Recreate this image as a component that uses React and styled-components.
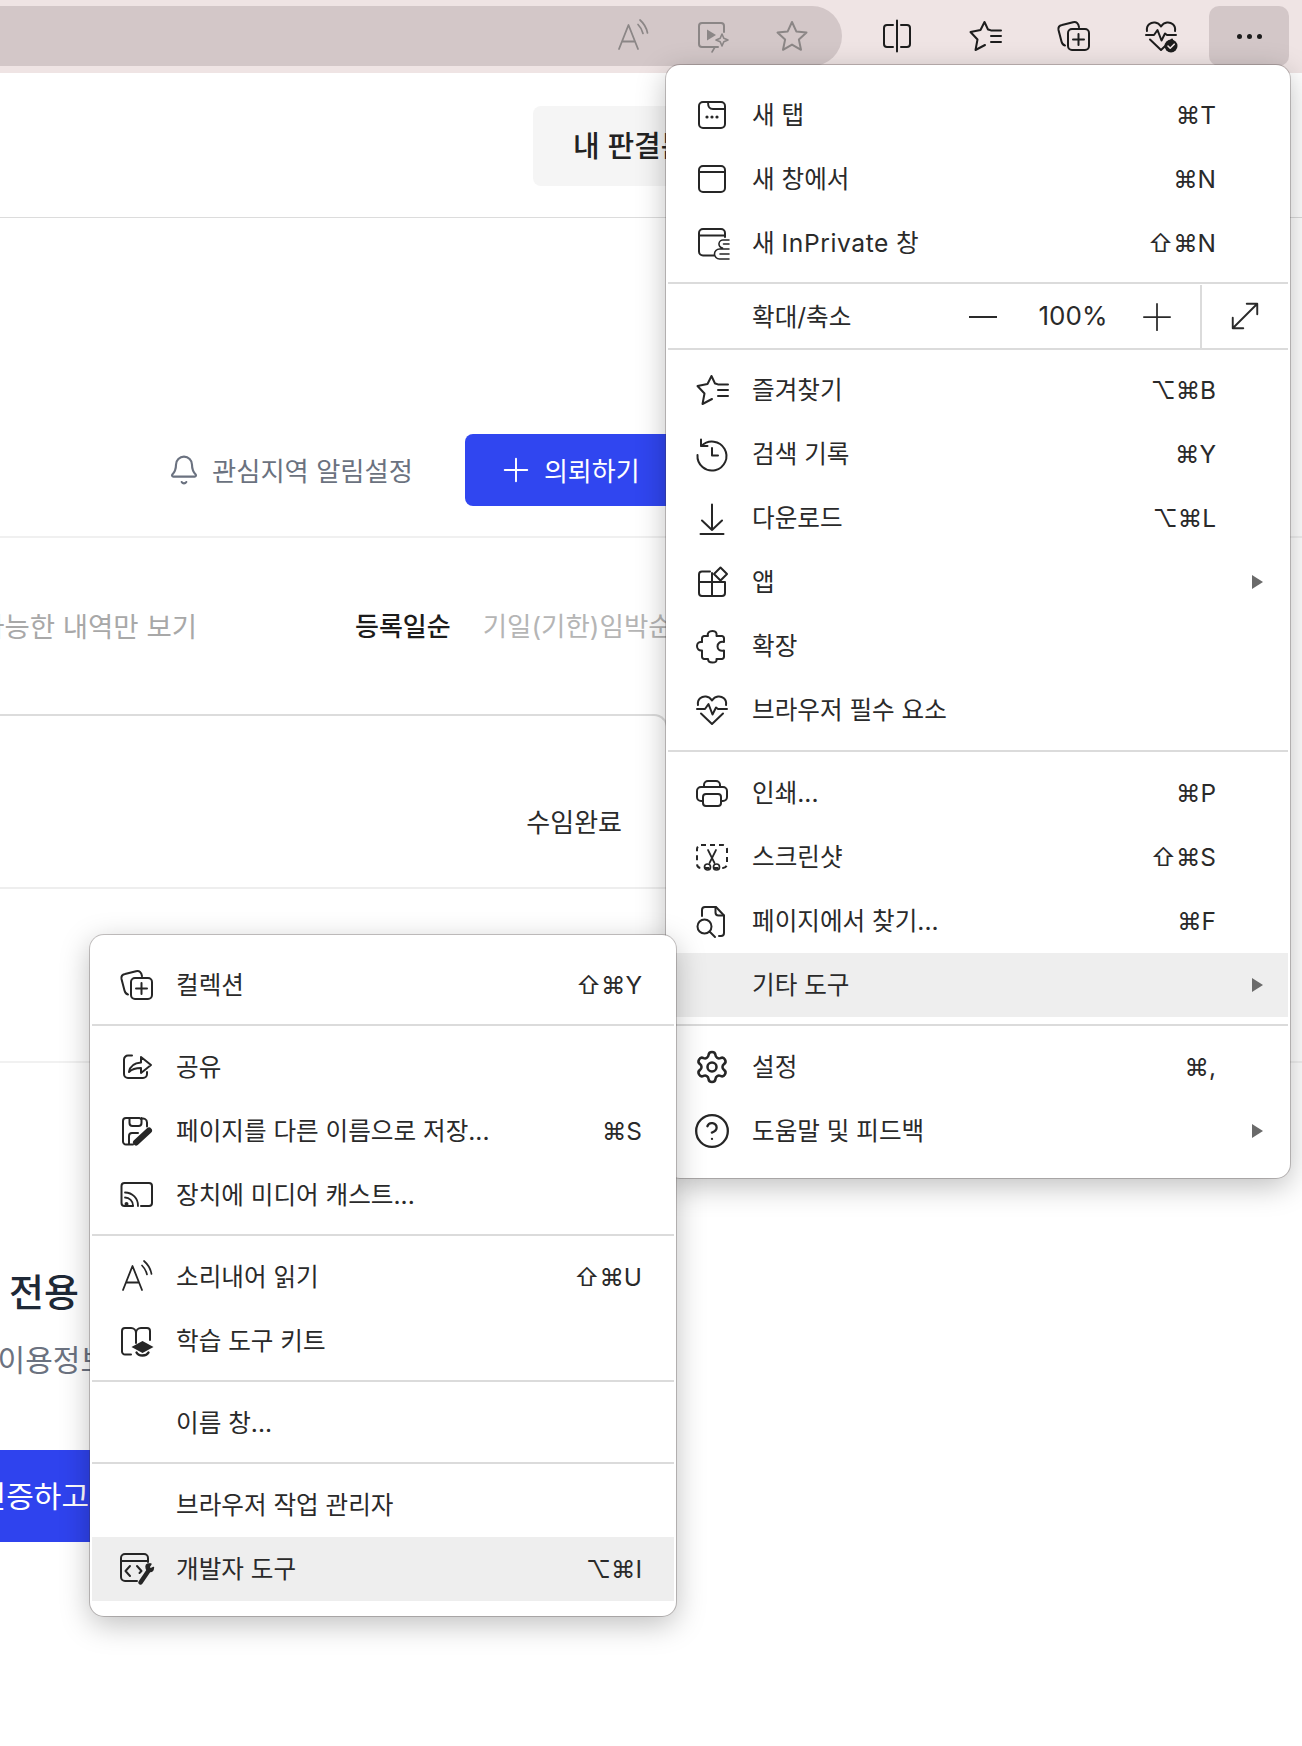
import React from "react";
import styled, { createGlobalStyle } from "styled-components";
import { Settings, CircleHelp, Bell } from "lucide-react";

const Global = createGlobalStyle`
  html, body { margin: 0; background: #fff; }
  * { box-sizing: border-box; }
  body { font-family: Inter, "Noto Sans CJK KR", "DejaVu Sans", sans-serif; color: #262626; }
`;

const Screen = styled.div`
  position: relative;
  width: 1302px;
  height: 1746px;
  overflow: hidden;
  background: #fff;
`;

/* browser chrome */
const Toolbar = styled.header`
  display: flex;
  height: 73px;
  padding-top: 6px;
  padding-right: 12px;
  background: #efe4e4;
`;
const AddressBar = styled.div`
  display: flex;
  align-items: center;
  justify-content: flex-end;
  gap: 48px;
  width: 842px;
  height: 60px;
  padding-right: 34px;
  border-radius: 0 30px 30px 0;
  background: #d3c7c8;
  color: #8b8686;
`;
const ToolGroup = styled.div`
  display: flex;
  align-items: center;
  gap: 56px;
  height: 60px;
  margin-left: 39px;
  color: #1d1d1d;
`;
const MoreButton = styled.button`
  display: flex;
  align-items: center;
  justify-content: center;
  gap: 5px;
  width: 80px;
  height: 60px;
  margin-left: 32px;
  padding: 0;
  border: 0;
  border-radius: 10px;
  background: #d3c7c8;
`;
const Dot = styled.i`
  width: 5px;
  height: 5px;
  border-radius: 50%;
  background: #1d1d1d;
`;

/* page behind the menus */
const Header = styled.div`
  height: 145px;
  padding: 33px 0 0 533px;
  border-bottom: 1px solid #dcdcdc;
`;
const VerdictButton = styled.div`
  display: flex;
  align-items: center;
  width: 220px;
  height: 80px;
  padding: 0 0 4px 40px;
  border-radius: 8px;
  background: #f5f5f5;
  font-size: 29px;
  font-weight: 500;
  color: #222;
  white-space: nowrap;
`;
const AlertRow = styled.div`
  display: flex;
  align-items: center;
  height: 320px;
  padding: 216px 0 31px 168px;
  border-bottom: 2px solid #f0f0f0;
`;
const AlertLink = styled.div`
  display: flex;
  align-items: center;
  gap: 12px;
  font-size: 26.3px;
  color: #6b7280;
  white-space: nowrap;
`;
const RequestButton = styled.div`
  display: flex;
  align-items: center;
  gap: 16px;
  width: 240px;
  height: 72px;
  margin-left: 52px;
  padding-left: 39px;
  border-radius: 8px;
  background: #3046f0;
  color: #fff;
  font-size: 26px;
  white-space: nowrap;
`;
const SortRow = styled.div`
  display: flex;
  align-items: center;
  height: 176px;
  padding-bottom: 3px;
  font-size: 26px;
  white-space: nowrap;
`;
const CutLeft = styled.div`
  display: flex;
  justify-content: flex-end;
  width: ${(p) => p.$width}px;
  white-space: nowrap;
`;
const FilterText = styled.span`
  font-size: 27.5px;
  color: #a8a8a8;
`;
const SortOption = styled.span`
  margin-left: ${(p) => p.$gap}px;
  font-size: ${(p) => (p.$on ? 26 : 26.5)}px;
  color: ${(p) => (p.$on ? "#1c1c1c" : "#b5b5b5")};
  font-weight: ${(p) => (p.$on ? 500 : 400)};
`;
const CaseCard = styled.div`
  display: flex;
  justify-content: flex-end;
  width: 668px;
  height: 175px;
  padding: 86px 44px 0 0;
  border-top: 2px solid #dcdcdc;
  border-right: 2px solid #dcdcdc;
  border-bottom: 2px solid #eeeeee;
  border-top-right-radius: 14px;
  font-size: 26px;
  line-height: 42px;
  color: #2b2b2b;
`;
const EmptyRow = styled.div`
  height: 174px;
  border-bottom: 2px solid #f1f1f1;
`;
const Cta = styled.section`
  padding-top: 204px;
`;
const CtaTitle = styled.h2`
  margin: 0;
  padding-left: 9px;
  font-size: 38px;
  line-height: 50px;
  font-weight: 500;
  color: #1f2937;
`;
const CtaText = styled(CutLeft)`
  margin-top: 23px;
  font-size: 30px;
  line-height: 40px;
  color: #6b7280;
`;
const CtaButton = styled(CutLeft)`
  align-items: center;
  height: 92px;
  margin-top: 70px;
  padding: 0 31px 4px 0;
  background: #2f43ee;
  color: #fff;
  font-size: 30px;
`;

/* menus */
const Panel = styled.nav`
  position: absolute;
  padding: 18px 2px 15px;
  border-radius: 14px;
  background: #fff;
  box-shadow: 0 0 0 1px rgba(60, 50, 50, 0.28), 0 8px 30px rgba(0, 0, 0, 0.26);
`;
const MainMenu = styled(Panel)`
  top: 65px;
  left: 666px;
  width: 624px;
  height: 1113px;
`;
const SubMenu = styled(Panel)`
  top: 935px;
  left: 90px;
  width: 586px;
  height: 681px;
`;
const Row = styled.div`
  display: flex;
  align-items: center;
  height: 64px;
  padding: 0 ${(p) => p.$right ?? 25}px 0 28px;
  background: ${(p) => (p.$on ? "#eeeeee" : "transparent")};
  font-size: 24.6px;
  color: #2a2a2a;
  white-space: nowrap;
`;
const IconSlot = styled.span`
  display: flex;
  width: 32px;
  height: 32px;
  margin-right: 24px;
  flex: none;
  color: #262626;
`;
const Label = styled.span`
  margin-bottom: 4px;
`;
const Latin = styled.span`
  letter-spacing: 0.6px;
`;
const Shortcut = styled.span`
  margin-left: auto;
  font-family: Inter, "DejaVu Sans", sans-serif;
  font-size: 24.4px;
  color: #2a2a2a;
`;
const ArrowSlot = styled.span`
  display: flex;
  justify-content: flex-end;
  width: 47px;
  flex: none;
  margin-left: ${(p) => (p.$alone ? "auto" : "0")};
`;
const Arrow = styled.i`
  width: 0;
  height: 0;
  border-left: 11px solid #6a6a6a;
  border-top: 7px solid transparent;
  border-bottom: 7px solid transparent;
`;
const Divider = styled.hr`
  height: 2px;
  margin: ${(p) => p.$t ?? 7}px 0 ${(p) => p.$b ?? 9}px;
  border: 0;
  background: #dbdbdb;
`;
const ZoomRow = styled.div`
  display: flex;
  align-items: center;
  height: 63px;
  padding-left: 84px;
  font-size: 24.6px;
  color: #2a2a2a;
`;
const ZoomMinus = styled.span`
  width: 28px;
  height: 2px;
  margin-left: auto;
  background: #2a2a2a;
`;
const ZoomValue = styled.span`
  width: 146px;
  padding: 0 0 2px 6px;
  text-align: center;
  font-size: 26px;
`;
const ZoomPlus = styled.span`
  display: flex;
  margin-right: 29px;
`;
const ZoomExpand = styled.span`
  display: flex;
  align-items: center;
  justify-content: center;
  width: 88px;
  height: 100%;
  padding-bottom: 2px;
  border-left: 2px solid #dbdbdb;
`;

const Svg = ({ children, size = 32 }) => (
  <svg
    width={size}
    height={size}
    viewBox="0 0 32 32"
    fill="none"
    stroke="currentColor"
    strokeWidth="2"
    strokeLinecap="round"
    strokeLinejoin="round"
    style={{ overflow: "visible", flex: "none" }}
  >
    {children}
  </svg>
);

const NewTab = () => (
  <Svg>
    <rect x="3" y="3" width="26" height="26" rx="4" />
    <path d="M12 3c0 5 1 7 5 7h12" />
    <g fill="currentColor" stroke="none">
      <circle cx="11" cy="18" r="1.6" />
      <circle cx="16" cy="18" r="1.6" />
      <circle cx="21" cy="18" r="1.6" />
    </g>
  </Svg>
);
const NewWindow = () => (
  <Svg>
    <rect x="3" y="3" width="26" height="26" rx="4" />
    <path d="M3 9h26" />
  </Svg>
);
const InPrivate = () => (
  <Svg>
    <path d="M18 28.500H7a4 4 0 0 1-4-4V6a4 4 0 0 1 4-4h18a4 4 0 0 1 4 4v4M3 8.500h26" />
    <path d="M33 13h-5.500a4 4 0 0 0-1 8M27.500 17H33M33 22h-9.500a5 5 0 0 0 0 10H33M24 27h9" strokeWidth="1.600" />
  </Svg>
);
const Favorites = () => (
  <Svg>
    <path d="M21 10l-2-.5L15.500 2 11.500 10 1.500 12l7 7.500L6.500 30l9.500-5" />
    <path d="M22 10.500h10M22 16h10M22 22h10" />
  </Svg>
);
const History = () => (
  <Svg>
    <path d="M5.500 8A14.500 14.500 0 1 1 1.500 17" />
    <path d="M5 1.500V8h6.500M16 10v7.500h6" />
  </Svg>
);
const Download = () => (
  <Svg>
    <path d="M16 2.500V28M6 18.500 16 28l10-9.500M4.500 32h23" />
  </Svg>
);
const Apps = () => (
  <Svg>
    <path d="M14 5.500H6a3 3 0 0 0-3 3V27a3 3 0 0 0 3 3h20a3 3 0 0 0 3-3V16H3M16 7v23" />
    <path d="M24.500 1.500 31 8l-6.500 6.500L18 8z" />
  </Svg>
);
const Puzzle = () => (
  <Svg>
    <path d="M12 6c-1-3 1-5 4.500-5S21 3 20.500 6H26a2.500 2.500 0 0 1 2 2.500V12c-3.500-1-6.500 1-6.500 4.500s3 5 6.500 4v6a2.500 2.500 0 0 1-2 2.500h-5.500c.5 2.500-1 3.500-4 3.500s-4.500-1-4.500-3.500H8a2.500 2.500 0 0 1-2-2.500v-6c-3 .5-5-1.500-5-4.500S3 11.500 6 12V8.500A2.500 2.500 0 0 1 8 6z" />
  </Svg>
);
const Heart = ({ badge }) => (
  <Svg>
    <path d="M2 11C1 5 6 2 10 2.500c2.500.3 4.500 1.700 6 4 1.500-2.300 3.500-3.700 6-4C26 2 31 5 30 11" />
    <path d="M5 19.500 16 30l11-10.500" />
    <path d="M1 15h8l3.500-5 4 10.500 3.500-7 2 1.500h9" />
    {badge && (
      <>
        <circle cx="26" cy="26" r="6.500" fill="currentColor" stroke="none" />
        <path d="M23 26l2.200 2.200 4-4" stroke="#efe4e4" strokeWidth="1.600" />
      </>
    )}
  </Svg>
);
const Printer = () => (
  <Svg>
    <path d="M8 10V8a4 4 0 0 1 4-4h8a4 4 0 0 1 4 4v2" />
    <path d="M7 24H5a4 4 0 0 1-4-4v-6a4 4 0 0 1 4-4h22a4 4 0 0 1 4 4v6a4 4 0 0 1-4 4h-2" />
    <rect x="7" y="17" width="18" height="12" rx="3" />
  </Svg>
);
const Screenshot = () => (
  <Svg>
    <rect x="1" y="4" width="30" height="23" rx="4" strokeDasharray="5 4" strokeLinecap="butt" />
    <path d="M12 9l6.500 13M20 9l-6.500 13" strokeWidth="1.700" />
    <circle cx="11.500" cy="26" r="3" strokeWidth="1.700" />
    <circle cx="20.500" cy="26" r="3" strokeWidth="1.700" />
  </Svg>
);
const FindPage = () => (
  <Svg>
    <path d="M6 11V5a3 3 0 0 1 3-3h11l8 8.500V28a3 3 0 0 1-3 3h-2" />
    <path d="M19.500 2v5.500a3 3 0 0 0 3 3H28" />
    <circle cx="8.500" cy="21.500" r="7" />
    <path d="M13.500 26.500 19 32" />
  </Svg>
);
const Collections = () => (
  <Svg>
    <rect x="11" y="9" width="21" height="21" rx="4" />
    <path d="M21.500 14v11M16 19.500h11" />
    <path d="M8 25.500c-2-.500-3-2-3.500-4L1.500 10C1 7 2.500 5.500 5 5l11-2.800c3.500-.7 5.500 1 6 5" />
  </Svg>
);
const Share = () => (
  <Svg>
    <path d="M12 4.500H8a4 4 0 0 0-4 4V23a4 4 0 0 0 4 4h15a4 4 0 0 0 4-4v-2" />
    <path d="M9 21c1-6 5-9 12-9.500V6l10 8-10 8v-5c-5 0-9 1-12 4z" />
  </Svg>
);
const SaveAs = () => (
  <Svg>
    <path d="M13 29.500H6a3 3 0 0 1-3-3V6a3 3 0 0 1 3-3h13.500l1.500 1a4 4 0 0 1 6 3.500v4" />
    <path d="M9.500 3v5a3 3 0 0 0 3 3h6a3 3 0 0 0 3-3V3M9 29v-8a3 3 0 0 1 3-3h6" />
    <path d="M16 27.500 29 15.500" strokeWidth="6" />
  </Svg>
);
const Cast = () => (
  <Svg>
    <path d="M1.500 7a3 3 0 0 1 3-3H29a3 3 0 0 1 3 3v17a3 3 0 0 1-3 3h-8M1.500 7v17a3 3 0 0 0 3 3H13" />
    <path d="M5 13.500A13 13 0 0 1 18 27M5 18.500A8 8 0 0 1 13 26.500" strokeWidth="1.800" />
    <circle cx="6.500" cy="25" r="2" fill="currentColor" stroke="none" />
  </Svg>
);
const ReadAloud = () => (
  <Svg>
    <path d="M3 29 12.500 5 22 29M6.500 21.500h12" strokeWidth="1.800" />
    <path d="M24 0c4 3.500 6.500 7.500 7.500 13M22 4.500c2.500 2.500 4.200 5.500 5 9" strokeWidth="1.700" />
  </Svg>
);
const Learning = () => (
  <Svg>
    <path d="M11 29.500H5a3 3 0 0 1-3-3V6a3 3 0 0 1 3-3h6a5 5 0 0 1 5 5v10M16 8a5 5 0 0 1 5-5h6a3 3 0 0 1 3 3v9" />
    <path d="M11.500 22 22.500 16l11 6-11 6z" fill="currentColor" stroke="none" />
    <path d="M16.500 27.500c2 4 10 4 12 0" strokeWidth="2.400" />
  </Svg>
);
const DevTools = () => (
  <Svg>
    <path d="M17 28H5a4 4 0 0 1-4-4V5a4 4 0 0 1 4-4h19a4 4 0 0 1 4 4v4M1 8h27" />
    <path d="M10 13l-4.500 5 4.500 5M17 13l4.500 5-2 2" />
    <path d="M20.500 29.500 29 17" strokeWidth="4.500" />
    <path d="M26 13.500c0 3 2 5 5 5 1.500 0 2.200-1.500 2.500-4l-3 1.500-1.500-2 2-3c-3-.5-5 0-5 2.500z" fill="currentColor" strokeWidth="1.400" />
  </Svg>
);
const SplitScreen = () => (
  <Svg>
    <path d="M12 5H6a3 3 0 0 0-3 3v16a3 3 0 0 0 3 3h6M20 5h6a3 3 0 0 1 3 3v16a3 3 0 0 1-3 3h-6M16 .5v31" />
  </Svg>
);
const VideoStar = () => (
  <Svg>
    <path d="M22 27H6a3 3 0 0 1-3-3V6a3 3 0 0 1 3-3h19a3 3 0 0 1 3 3v6" />
    <path d="M11 9.500v11l9-5.500z" fill="currentColor" stroke="none" />
    <path d="M26 14l1.800 4.200L32 20l-4.200 1.800L26 26l-1.800-4.200L20 20l4.200-1.800zM19 27l-3 5" strokeWidth="1.600" />
  </Svg>
);
const Star = () => (
  <Svg>
    <path d="M16 2l4.300 9.400 10.200 1.200-7.600 7 2.100 10.200L16 24.600l-9 5.200 2.100-10.200-7.600-7 10.200-1.200z" />
  </Svg>
);

const MenuRow = ({ icon: Icon, label, shortcut, arrow, on, right }) => (
  <Row $on={on} $right={right}>
    <IconSlot>{Icon && <Icon />}</IconSlot>
    <Label>{label}</Label>
    {shortcut && <Shortcut>{shortcut}</Shortcut>}
    {right === undefined && (
      <ArrowSlot $alone={!shortcut}>{arrow && <Arrow />}</ArrowSlot>
    )}
  </Row>
);

const SettingsIcon = () => <Settings size={36} strokeWidth={1.7} style={{ margin: -2 }} />;
const HelpIcon = () => <CircleHelp size={38} strokeWidth={1.45} style={{ margin: -3 }} />;

export default function App() {
  return (
    <Screen>
      <Global />
      <Toolbar>
        <AddressBar>
          <ReadAloud />
          <VideoStar />
          <Star />
        </AddressBar>
        <ToolGroup>
          <SplitScreen />
          <Favorites />
          <Collections />
          <Heart badge />
        </ToolGroup>
        <MoreButton aria-label="더 보기">
          <Dot />
          <Dot />
          <Dot />
        </MoreButton>
      </Toolbar>

      <Header>
        <VerdictButton>내 판결문</VerdictButton>
      </Header>
      <AlertRow>
        <AlertLink>
          <Bell size={32} strokeWidth={1.6} />
          관심지역 알림설정
        </AlertLink>
        <RequestButton>
          <Svg size={24}>
            <path d="M16 1v30M1 16h30" strokeWidth="2.600" />
          </Svg>
          의뢰하기
        </RequestButton>
      </AlertRow>
      <SortRow>
        <CutLeft $width={197}>
          <FilterText>가능한 내역만 보기</FilterText>
        </CutLeft>
        <SortOption $gap={158} $on>등록일순</SortOption>
        <SortOption $gap={32}>기일(기한)임박순</SortOption>
      </SortRow>
      <CaseCard>수임완료</CaseCard>
      <EmptyRow />
      <Cta>
        <CtaTitle>전용</CtaTitle>
        <CtaText $width={108}>이용정보</CtaText>
        <CtaButton $width={120}>인증하고</CtaButton>
      </Cta>

      <MainMenu>
        <MenuRow icon={NewTab} label="새 탭" shortcut="⌘T" />
        <MenuRow icon={NewWindow} label="새 창에서" shortcut="⌘N" />
        <MenuRow icon={InPrivate} label={<>새 <Latin>InPrivate</Latin> 창</>} shortcut="⇧⌘N" />
        <Divider $b={1} />
        <ZoomRow>
          <Label>확대/축소</Label>
          <ZoomMinus />
          <ZoomValue>100%</ZoomValue>
          <ZoomPlus>
            <Svg size={28}>
              <path d="M16 1v30M1 16h30" />
            </Svg>
          </ZoomPlus>
          <ZoomExpand>
            <Svg size={28}>
              <path d="M2 30 30 2M18 2h12v12M2 18v12h12" strokeWidth="2.200" />
            </Svg>
          </ZoomExpand>
        </ZoomRow>
        <Divider $t={0} $b={8} />
        <MenuRow icon={Favorites} label="즐겨찾기" shortcut="⌥⌘B" />
        <MenuRow icon={History} label="검색 기록" shortcut="⌘Y" />
        <MenuRow icon={Download} label="다운로드" shortcut="⌥⌘L" />
        <MenuRow icon={Apps} label="앱" arrow />
        <MenuRow icon={Puzzle} label="확장" />
        <MenuRow icon={Heart} label="브라우저 필수 요소" />
        <Divider $t={8} />
        <MenuRow icon={Printer} label="인쇄..." shortcut="⌘P" />
        <MenuRow icon={Screenshot} label="스크린샷" shortcut="⇧⌘S" />
        <MenuRow icon={FindPage} label="페이지에서 찾기..." shortcut="⌘F" />
        <MenuRow label="기타 도구" arrow on />
        <Divider />
        <MenuRow icon={SettingsIcon} label="설정" shortcut="⌘," />
        <MenuRow icon={HelpIcon} label="도움말 및 피드백" arrow />
      </MainMenu>

      <SubMenu>
        <MenuRow icon={Collections} label="컬렉션" shortcut="⇧⌘Y" right={32} />
        <Divider />
        <MenuRow icon={Share} label="공유" right={32} />
        <MenuRow icon={SaveAs} label="페이지를 다른 이름으로 저장..." shortcut="⌘S" right={32} />
        <MenuRow icon={Cast} label="장치에 미디어 캐스트..." right={32} />
        <Divider />
        <MenuRow icon={ReadAloud} label="소리내어 읽기" shortcut="⇧⌘U" right={32} />
        <MenuRow icon={Learning} label="학습 도구 키트" right={32} />
        <Divider />
        <MenuRow label="이름 창..." right={32} />
        <Divider />
        <MenuRow label="브라우저 작업 관리자" right={32} />
        <MenuRow icon={DevTools} label="개발자 도구" shortcut="⌥⌘I" on right={32} />
      </SubMenu>
    </Screen>
  );
}
